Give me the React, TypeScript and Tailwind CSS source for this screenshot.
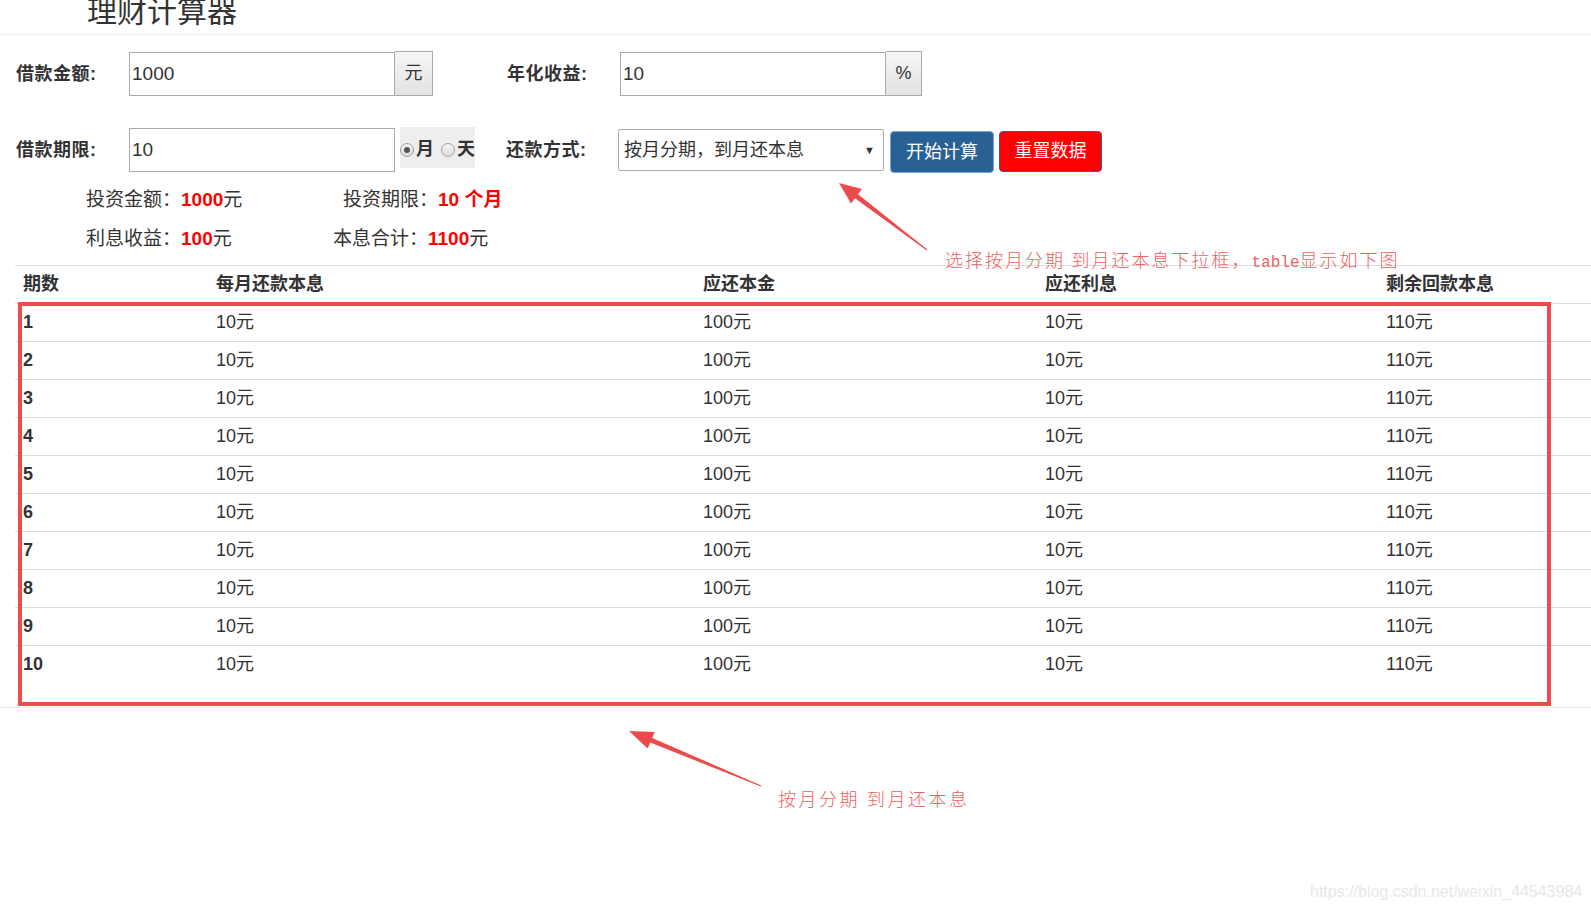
import React from "react";

const rows = Array.from({ length: 10 }, (_, i) => ({
  qi: i + 1,
  meiyue: "10元",
  benjin: "100元",
  lixi: "10元",
  shengyu: "110元",
}));

const cols = ["w-[193px]", "w-[487px]", "w-[342px]", "w-[341px]", "flex-1"];

function Radio({ checked }: { checked?: boolean }) {
  return (
    <span className="w-[14px] h-[14px] rounded-full border border-[#a0a0a0] bg-gradient-to-b from-[#f4f4f4] to-[#dcdcdc] flex items-center justify-center">
      {checked && <span className="w-[6px] h-[6px] rounded-full bg-[#555]" />}
    </span>
  );
}

export default function App() {
  return (
    <div className="relative min-h-[910px] bg-white text-[#333] font-['Liberation_Sans','Noto_Sans_CJK_SC',sans-serif]">
      {/* 标题 */}
      <div className="h-[35px] border-b border-[#eee] overflow-hidden">
        <h1 className="pl-[87px] text-[30px] leading-[30px] mt-[-3px] font-normal">理财计算器</h1>
      </div>

      {/* 第一行 */}
      <div className="flex items-center pl-[16px] mt-[17px] h-[44px]">
        <label className="w-[113px] text-[18px] font-bold tracking-[0.5px]">借款金额:</label>
        <div className="flex">
          <input
            readOnly
            value="1000"
            className="w-[266px] h-[44px] border border-[#aaa] px-[2px] text-[19px] outline-none"
          />
          <span className="w-[38px] h-[45px] -mt-[1px] border border-l-0 border-[#aaa] bg-gradient-to-b from-[#f6f6f6] to-[#e2e2e2] flex items-center justify-center text-[18px]">
            元
          </span>
        </div>
        <label className="ml-[74px] w-[113px] text-[18px] font-bold tracking-[0.5px]">年化收益:</label>
        <div className="flex">
          <input
            readOnly
            value="10"
            className="w-[266px] h-[44px] border border-[#aaa] px-[2px] text-[19px] outline-none"
          />
          <span className="w-[36px] h-[45px] -mt-[1px] border border-l-0 border-[#aaa] bg-gradient-to-b from-[#f6f6f6] to-[#e2e2e2] flex items-center justify-center text-[18px]">
            %
          </span>
        </div>
      </div>

      {/* 第二行 */}
      <div className="flex items-center pl-[16px] mt-[31px] h-[46px]">
        <label className="w-[113px] text-[18px] font-bold tracking-[0.5px]">借款期限:</label>
        <input
          readOnly
          value="10"
          className="w-[266px] h-[44px] border border-[#aaa] px-[2px] text-[19px] outline-none"
        />
        <div className="self-start ml-[5px] w-[75px] h-[41px] pt-[4px] bg-[#eee] flex items-center text-[18px] font-bold">
          <Radio checked />
          <span className="ml-[2px]">月</span>
          <span className="ml-[7px]">
            <Radio />
          </span>
          <span className="ml-[2px]">天</span>
        </div>
        <label className="ml-[31px] w-[112px] text-[18px] font-bold tracking-[0.5px]">还款方式:</label>
        <div className="w-[266px] h-[42px] border border-[#aaa] rounded-[2px] flex items-center pl-[5px] pr-[8px] text-[18px]">
          <span className="flex-1">按月分期，到月还本息</span>
          <span className="text-[11px]">▼</span>
        </div>
        <button className="self-end ml-[6px] w-[104px] h-[42px] rounded-[4px] bg-[#2a6193] border border-[#78a6e2] text-white text-[18px]">
          开始计算
        </button>
        <button className="self-end ml-[5px] w-[103px] h-[41px] mb-[1px] rounded-[4px] bg-[#ff0000] border border-[#3a5a88] text-white text-[18px]">
          重置数据
        </button>
      </div>

      {/* 汇总 */}
      <div className="mt-[7px] pl-[86px] text-[19px] leading-[39px]">
        <div className="flex">
          <span className="w-[257px]">
            投资金额：<b className="text-[#f00]">1000</b>元
          </span>
          <span>
            投资期限：<b className="text-[#f00]">10 个月</b>
          </span>
        </div>
        <div className="flex">
          <span className="w-[247px]">
            利息收益：<b className="text-[#f00]">100</b>元
          </span>
          <span>
            本息合计：<b className="text-[#f00]">1100</b>元
          </span>
        </div>
      </div>

      {/* 表格 */}
      <div className="mt-[7px] ml-[15px] text-[18px]">
        <div className="flex h-[38px] items-center border-t border-[#ddd] font-bold">
          {["期数", "每月还款本息", "应还本金", "应还利息", "剩余回款本息"].map((h, i) => (
            <div key={h} className={`${cols[i]} px-[8px]`}>
              {h}
            </div>
          ))}
        </div>
        {rows.map((r) => (
          <div key={r.qi} className="flex h-[38px] items-center border-t border-[#ddd]">
            <div className={`${cols[0]} px-[8px] font-bold`}>{r.qi}</div>
            <div className={`${cols[1]} px-[8px]`}>{r.meiyue}</div>
            <div className={`${cols[2]} px-[8px]`}>{r.benjin}</div>
            <div className={`${cols[3]} px-[8px]`}>{r.lixi}</div>
            <div className={`${cols[4]} px-[8px]`}>{r.shengyu}</div>
          </div>
        ))}
        <div className="h-[24px]" />
      </div>
      <div className="border-t border-[#e6e6e6]" />

      {/* 标注 */}
      <div className="absolute left-[18px] top-[302px] w-[1533px] h-[404px] border-[4px] border-[#ee4b4b] pointer-events-none" />
      <svg className="absolute left-0 top-0 pointer-events-none" width="1591" height="910">
        <polygon
          fill="#ec4b4b"
          points="927.3,249.6 858,194.3 862,189.1 839,183 851,203.5 855,198.3 926.7,250.4"
        />
        <polygon
          fill="#ec4b4b"
          points="761.2,785.5 652.2,737.9 654.7,731.9 629,731 647.7,748.5 650.2,742.5 760.8,786.5"
        />
      </svg>
      <div className="absolute left-[945px] top-[251px] text-[18px] leading-[20px] tracking-[2px] text-[#f06060] font-['Liberation_Serif','Noto_Sans_CJK_SC',serif] font-light whitespace-nowrap">
        选择按月分期 到月还本息下拉框，
        <span className="font-['Liberation_Mono',monospace] font-normal text-[16px] tracking-normal">table</span>
        显示如下图
      </div>
      <div className="absolute left-[778px] top-[790px] text-[18px] leading-[20px] tracking-[2.5px] text-[#f06060] font-['Liberation_Serif','Noto_Sans_CJK_SC',serif] font-light whitespace-nowrap">
        按月分期 到月还本息
      </div>
      <div className="absolute left-[1310px] top-[882px] text-[16px] leading-[20px] text-[#e8e8e8]">
        https://blog.csdn.net/weixin_44543984
      </div>
    </div>
  );
}
